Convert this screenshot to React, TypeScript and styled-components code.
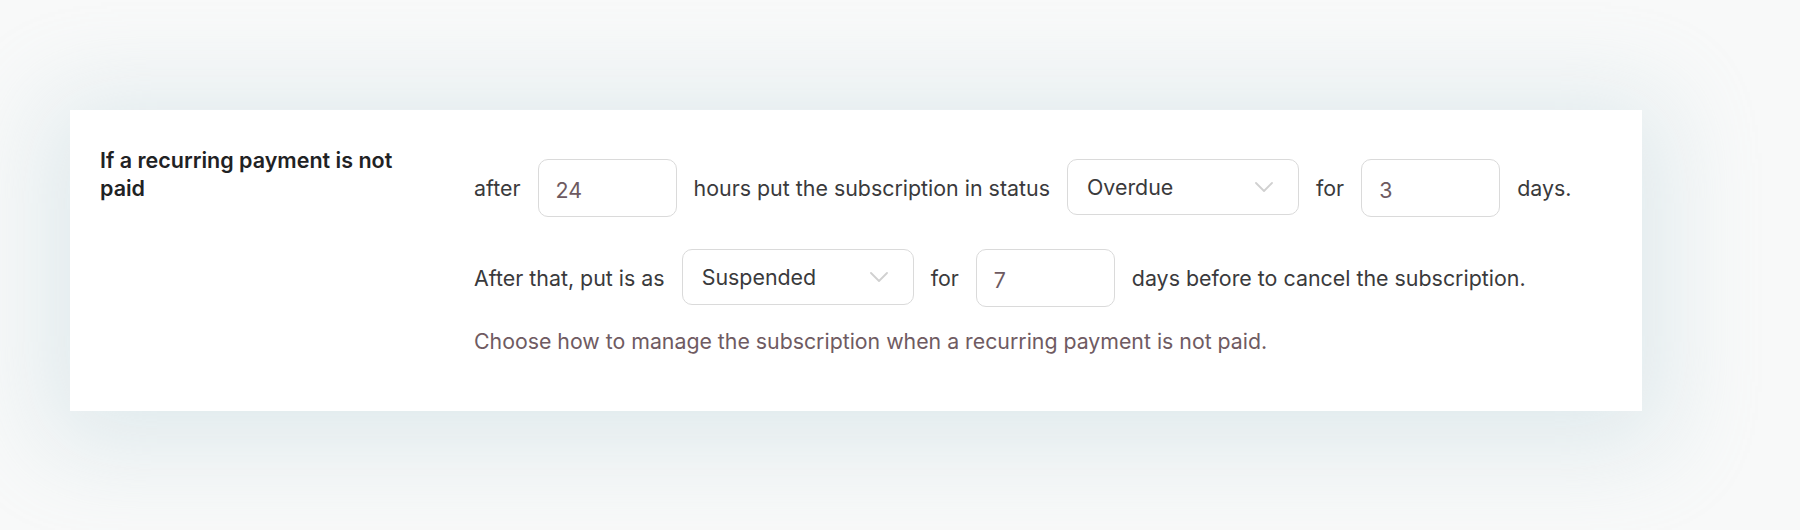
import React from "react";
import styled, { createGlobalStyle } from "styled-components";

const GlobalStyle = createGlobalStyle`
  html, body {
    margin: 0;
    padding: 0;
    background: #f8f9f9;
    font-family: Inter, "Noto Sans", "Liberation Sans", sans-serif;
  }
  * { box-sizing: border-box; }
`;

const Page = styled.div`
  width: 1800px;
  height: 530px;
  padding: 110px 0 0 70px;
  overflow: hidden;
`;

const Card = styled.section`
  width: 1572px;
  background: #ffffff;
  padding: 36px 30px 56px 30px;
  display: grid;
  grid-template-columns: 320px 1fr;
  column-gap: 54px;
  box-shadow: 0 12px 90px 22px rgba(192, 214, 222, 0.45);
`;

const Label = styled.h3`
  margin: 0;
  font-size: 21.5px;
  line-height: 28px;
  font-weight: 600;
  color: #1f2224;
`;

const Fields = styled.div`
  display: flex;
  flex-direction: column;
  padding-top: 13px;
`;

const Row = styled.div<{ $spaced?: boolean }>`
  display: flex;
  align-items: center;
  gap: 17px;
  min-height: 58px;
  margin-bottom: ${(p) => (p.$spaced ? "32px" : "0")};
  font-size: 21.4px;
  color: #3a3a3c;
`;

const Text = styled.span`
  white-space: nowrap;
  line-height: 28px;
`;

const NumberInput = styled.input`
  width: 139px;
  height: 58px;
  padding: 4px 0 0 17px;
  border: 1px solid #dadada;
  border-radius: 10px;
  background: #fff;
  font-family: inherit;
  font-size: 21.4px;
  color: #6e5a61;
  outline: none;
`;

const SelectWrap = styled.div`
  position: relative;
  width: 232px;
  height: 56px;
  margin-top: -3px;
`;

const Select = styled.select`
  appearance: none;
  -webkit-appearance: none;
  width: 100%;
  height: 100%;
  padding: 0 40px 0 19px;
  border: 1px solid #dadada;
  border-radius: 10px;
  background: #fff;
  font-family: inherit;
  font-size: 21.4px;
  color: #3a3a3c;
  outline: none;
`;

const Chevron = styled.svg`
  position: absolute;
  right: 26px;
  top: 23px;
  width: 18px;
  height: 10px;
  pointer-events: none;
`;

const Description = styled.p`
  margin: 20px 0 0 0;
  font-size: 21.3px;
  line-height: 28px;
  color: #6f5b62;
`;

const StatusSelect: React.FC<{ value: string; options: string[] }> = ({ value, options }) => (
  <SelectWrap>
    <Select defaultValue={value}>
      {options.map((o) => (
        <option key={o} value={o}>
          {o}
        </option>
      ))}
    </Select>
    <Chevron viewBox="0 0 18 10" fill="none">
      <path d="M1 1 L9 9 L17 1" stroke="#d0d0d0" strokeWidth="1.8" strokeLinecap="round" strokeLinejoin="round" />
    </Chevron>
  </SelectWrap>
);

const statuses = ["Overdue", "Suspended", "Cancelled"];

export default function App() {
  return (
    <>
      <GlobalStyle />
      <Page>
        <Card>
          <Label>If a recurring payment is not paid</Label>
          <Fields>
            <Row $spaced>
              <Text>after</Text>
              <NumberInput type="text" defaultValue="24" />
              <Text>hours put the subscription in status</Text>
              <StatusSelect value="Overdue" options={statuses} />
              <Text>for</Text>
              <NumberInput type="text" defaultValue="3" />
              <Text>days.</Text>
            </Row>
            <Row>
              <Text>After that, put is as</Text>
              <StatusSelect value="Suspended" options={statuses} />
              <Text>for</Text>
              <NumberInput type="text" defaultValue="7" />
              <Text>days before to cancel the subscription.</Text>
            </Row>
            <Description>Choose how to manage the subscription when a recurring payment is not paid.</Description>
          </Fields>
        </Card>
      </Page>
    </>
  );
}
